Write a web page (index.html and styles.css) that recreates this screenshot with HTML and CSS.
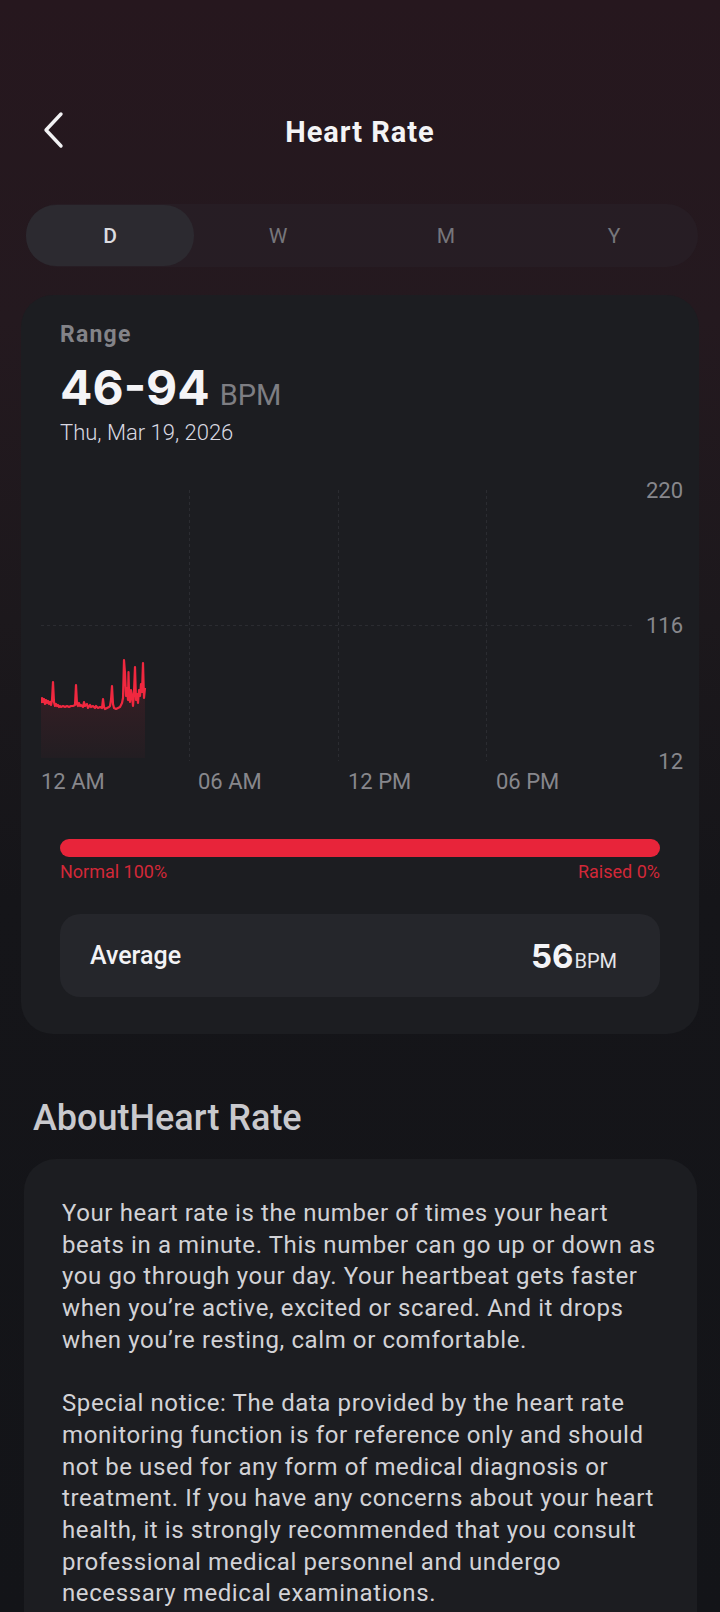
FILE: index.html
```html
<!DOCTYPE html>
<html lang="en">
<head>
<meta charset="utf-8">
<title>Heart Rate</title>
<link rel="stylesheet" href="styles.css">
</head>
<body>
<div class="screen">
  <header class="topbar">
    <button class="back" aria-label="Back">
      <svg width="26" height="38" viewBox="0 0 26 38"><path d="M20 3 L5 19 L20 35" fill="none" stroke="#f2f2f4" stroke-width="3.4" stroke-linecap="round" stroke-linejoin="round"/></svg>
    </button>
    <h1 class="title">Heart Rate</h1>
  </header>

  <nav class="segments">
    <span class="seg active">D</span>
    <span class="seg">W</span>
    <span class="seg">M</span>
    <span class="seg">Y</span>
  </nav>

  <section class="card summary">
    <div class="head">
      <div class="label">Range</div>
      <div class="range"><span class="num">46-94</span><span class="unit">BPM</span></div>
      <div class="date">Thu, Mar 19, 2026</div>
    </div>

    <svg class="chart" width="642" height="325" viewBox="0 0 642 325">
      <defs>
        <linearGradient id="fillg" x1="0" y1="0" x2="0" y2="1">
          <stop offset="0" stop-color="#e8253a" stop-opacity="0.16"/>
          <stop offset="1" stop-color="#e8253a" stop-opacity="0.03"/>
        </linearGradient>
      </defs>
      <g stroke="#2b2c31" stroke-width="1" stroke-dasharray="3 3">
        <line x1="148.5" y1="20" x2="148.5" y2="291"/>
        <line x1="297.5" y1="20" x2="297.5" y2="291"/>
        <line x1="445.5" y1="20" x2="445.5" y2="291"/>
        <line x1="0" y1="155.5" x2="594" y2="155.5"/>
      </g>
      <path fill="url(#fillg)" d="M0,233 L1,228 L2,232 L3,229 L4,234 L5,230 L6,233 L7,231 L8,234 L9,232 L10,235 L11,230 L12,212 L13,232 L14,236 L15,234 L16,236 L17,235 L18,237 L19,236 L20,237 L22,236 L24,237 L26,236 L28,237 L30,236 L32,236 L34,235 L35,215 L36,234 L37,236 L38,233 L39,236 L40,235 L42,237 L43,232 L44,236 L46,234 L47,238 L49,235 L50,237 L52,236 L54,238 L55,236 L57,238 L59,237 L61,238 L62,229 L63,237 L64,239 L66,238 L68,237 L69,236 L70,230 L71,216 L72,234 L73,238 L75,239 L77,238 L79,237 L80,235 L81,233 L82,228 L83,190 L84,203 L85,226 L86,218 L87,230 L87.5,202 L88,222 L89,232 L90,220 L91,226 L92,236 L93,222 L94,197 L95,230 L96,224 L97,233 L98,220 L99,226 L100,214 L101,222 L102,193 L103,228 L104,218 L104,288 L0,288 Z"/>
      <path fill="none" stroke="#f0283f" stroke-width="2.2" stroke-linejoin="round" d="M0,233 L1,228 L2,232 L3,229 L4,234 L5,230 L6,233 L7,231 L8,234 L9,232 L10,235 L11,230 L12,212 L13,232 L14,236 L15,234 L16,236 L17,235 L18,237 L19,236 L20,237 L22,236 L24,237 L26,236 L28,237 L30,236 L32,236 L34,235 L35,215 L36,234 L37,236 L38,233 L39,236 L40,235 L42,237 L43,232 L44,236 L46,234 L47,238 L49,235 L50,237 L52,236 L54,238 L55,236 L57,238 L59,237 L61,238 L62,229 L63,237 L64,239 L66,238 L68,237 L69,236 L70,230 L71,216 L72,234 L73,238 L75,239 L77,238 L79,237 L80,235 L81,233 L82,228 L83,190 L84,203 L85,226 L86,218 L87,230 L87.5,202 L88,222 L89,232 L90,220 L91,226 L92,236 L93,222 L94,197 L95,230 L96,224 L97,233 L98,220 L99,226 L100,214 L101,222 L102,193 L103,228 L104,218"/>
      <g class="axis" font-family="Roboto, sans-serif" font-size="22" fill="#87878c">
        <text x="642" y="28" text-anchor="end">220</text>
        <text x="642" y="163" text-anchor="end">116</text>
        <text x="642" y="299" text-anchor="end">12</text>
        <text x="0" y="319">12 AM</text>
        <text x="157" y="319">06 AM</text>
        <text x="307" y="319">12 PM</text>
        <text x="455" y="319">06 PM</text>
      </g>
    </svg>

    <div class="dist">
      <div class="bar"></div>
      <div class="dist-labels"><span>Normal 100%</span><span>Raised 0%</span></div>
    </div>

    <div class="avg">
      <span class="avg-label">Average</span>
      <span class="avg-value"><span class="avg-num">56</span><span class="avg-unit">BPM</span></span>
    </div>
  </section>

  <h2 class="about-title">AboutHeart Rate</h2>
  <section class="card about">
    <p>Your heart rate is the number of times your heart beats in a minute. This number can go up or down as you go through your day. Your heartbeat gets faster when you’re active, excited or scared. And it drops when you’re resting, calm or comfortable.</p>
    <p>Special notice: The data provided by the heart rate monitoring function is for reference only and should not be used for any form of medical diagnosis or treatment. If you have any concerns about your heart health, it is strongly recommended that you consult professional medical personnel and undergo necessary medical examinations.</p>
  </section>
</div>
</body>
</html>
```

FILE: styles.css
```css
* { box-sizing: border-box; }
html, body { margin: 0; padding: 0; }
body {
  width: 720px;
  height: 1612px;
  overflow: hidden;
  background: linear-gradient(180deg, #26171e 0px, #24191f 320px, #1c181c 620px, #151519 900px, #131418 1612px);
  font-family: Roboto, "Noto Sans", sans-serif;
  color: #e8e8ec;
}
.screen { display: flex; flex-direction: column; }

.topbar {
  margin-top: 100px;
  height: 64px;
  display: flex;
  align-items: center;
  justify-content: center;
  position: relative;
}
.back {
  position: absolute;
  left: 39px;
  top: 11px;
  background: none;
  border: 0;
  padding: 0;
  width: 30px;
  height: 38px;
  display: flex;
  align-items: center;
  justify-content: center;
}
.title {
  margin: 0;
  font-size: 29px;
  font-weight: 700;
  letter-spacing: 1px;
  color: #f4f4f6;
}

.segments {
  margin: 40px 22px 0 26px;
  height: 63px;
  border-radius: 32px;
  background: rgba(40, 32, 38, 0.7);
  display: grid;
  grid-template-columns: repeat(4, 1fr);
}
.seg {
  display: flex;
  align-items: center;
  justify-content: center;
  font-size: 21px;
  color: #76767b;
  border-radius: 30px;
}
.seg.active {
  background: #2c2a30;
  color: #dcdce0;
  font-weight: 500;
  margin: 1px 0;
}

.card {
  background: #1c1d21;
  border-radius: 32px;
}
.summary {
  margin: 28px 21px 0 21px;
  padding: 26px 16px 37px 20px;
  display: flex;
  flex-direction: column;
}
.head { padding-left: 19px; }
.label {
  font-size: 23px;
  line-height: 28px;
  font-weight: 700;
  letter-spacing: 1.2px;
  color: #838388;
}
.range {
  margin-top: 11px;
  line-height: 56px;
  height: 56px;
  display: flex;
  align-items: baseline;
  gap: 10px;
}
.num {
  font-family: Inter, "Noto Sans", sans-serif;
  font-size: 48px;
  font-weight: 700;
  color: #f4f4f7;
}
.unit {
  font-size: 29px;
  color: #7e7e83;
}
.date {
  margin-top: 4px;
  font-size: 22px;
  line-height: 26px;
  color: #d9d9e2;
  font-weight: 300;
}
.chart {
  display: block;
  margin-top: 24px;
}
.dist {
  margin: 44px 23px 0 19px;
}
.bar {
  height: 18px;
  border-radius: 9px;
  background: #e8243a;
}
.dist-labels {
  margin-top: 4px;
  display: flex;
  justify-content: space-between;
  font-size: 18px;
  line-height: 22px;
  color: #d22838;
}
.avg {
  margin: 31px 23px 0 19px;
  height: 83px;
  border-radius: 20px;
  background: #25262b;
  display: flex;
  align-items: center;
  justify-content: space-between;
  padding: 0 43px 0 30px;
}
.avg-label {
  font-size: 25px;
  font-weight: 500;
  color: #f2f2f5;
}
.avg-value { display: flex; align-items: baseline; }
.avg-num {
  font-family: Inter, "Noto Sans", sans-serif;
  font-size: 33px;
  font-weight: 700;
  color: #f4f4f7;
}
.avg-unit {
  font-size: 20px;
  color: #e6e6ea;
  margin-left: 1px;
}

.about-title {
  margin: 62px 0 0 33px;
  font-size: 36px;
  line-height: 44px;
  font-weight: 500;
  color: #c9c9cd;
}
.about {
  margin: 19px 23px 0 24px;
  padding: 39px 32px 40px 38px;
}
.about p {
  margin: 0;
  font-size: 24px;
  line-height: 31.7px;
  letter-spacing: 0.6px;
  color: #d2d2d6;
}
.about p + p { margin-top: 31.7px; }
```
